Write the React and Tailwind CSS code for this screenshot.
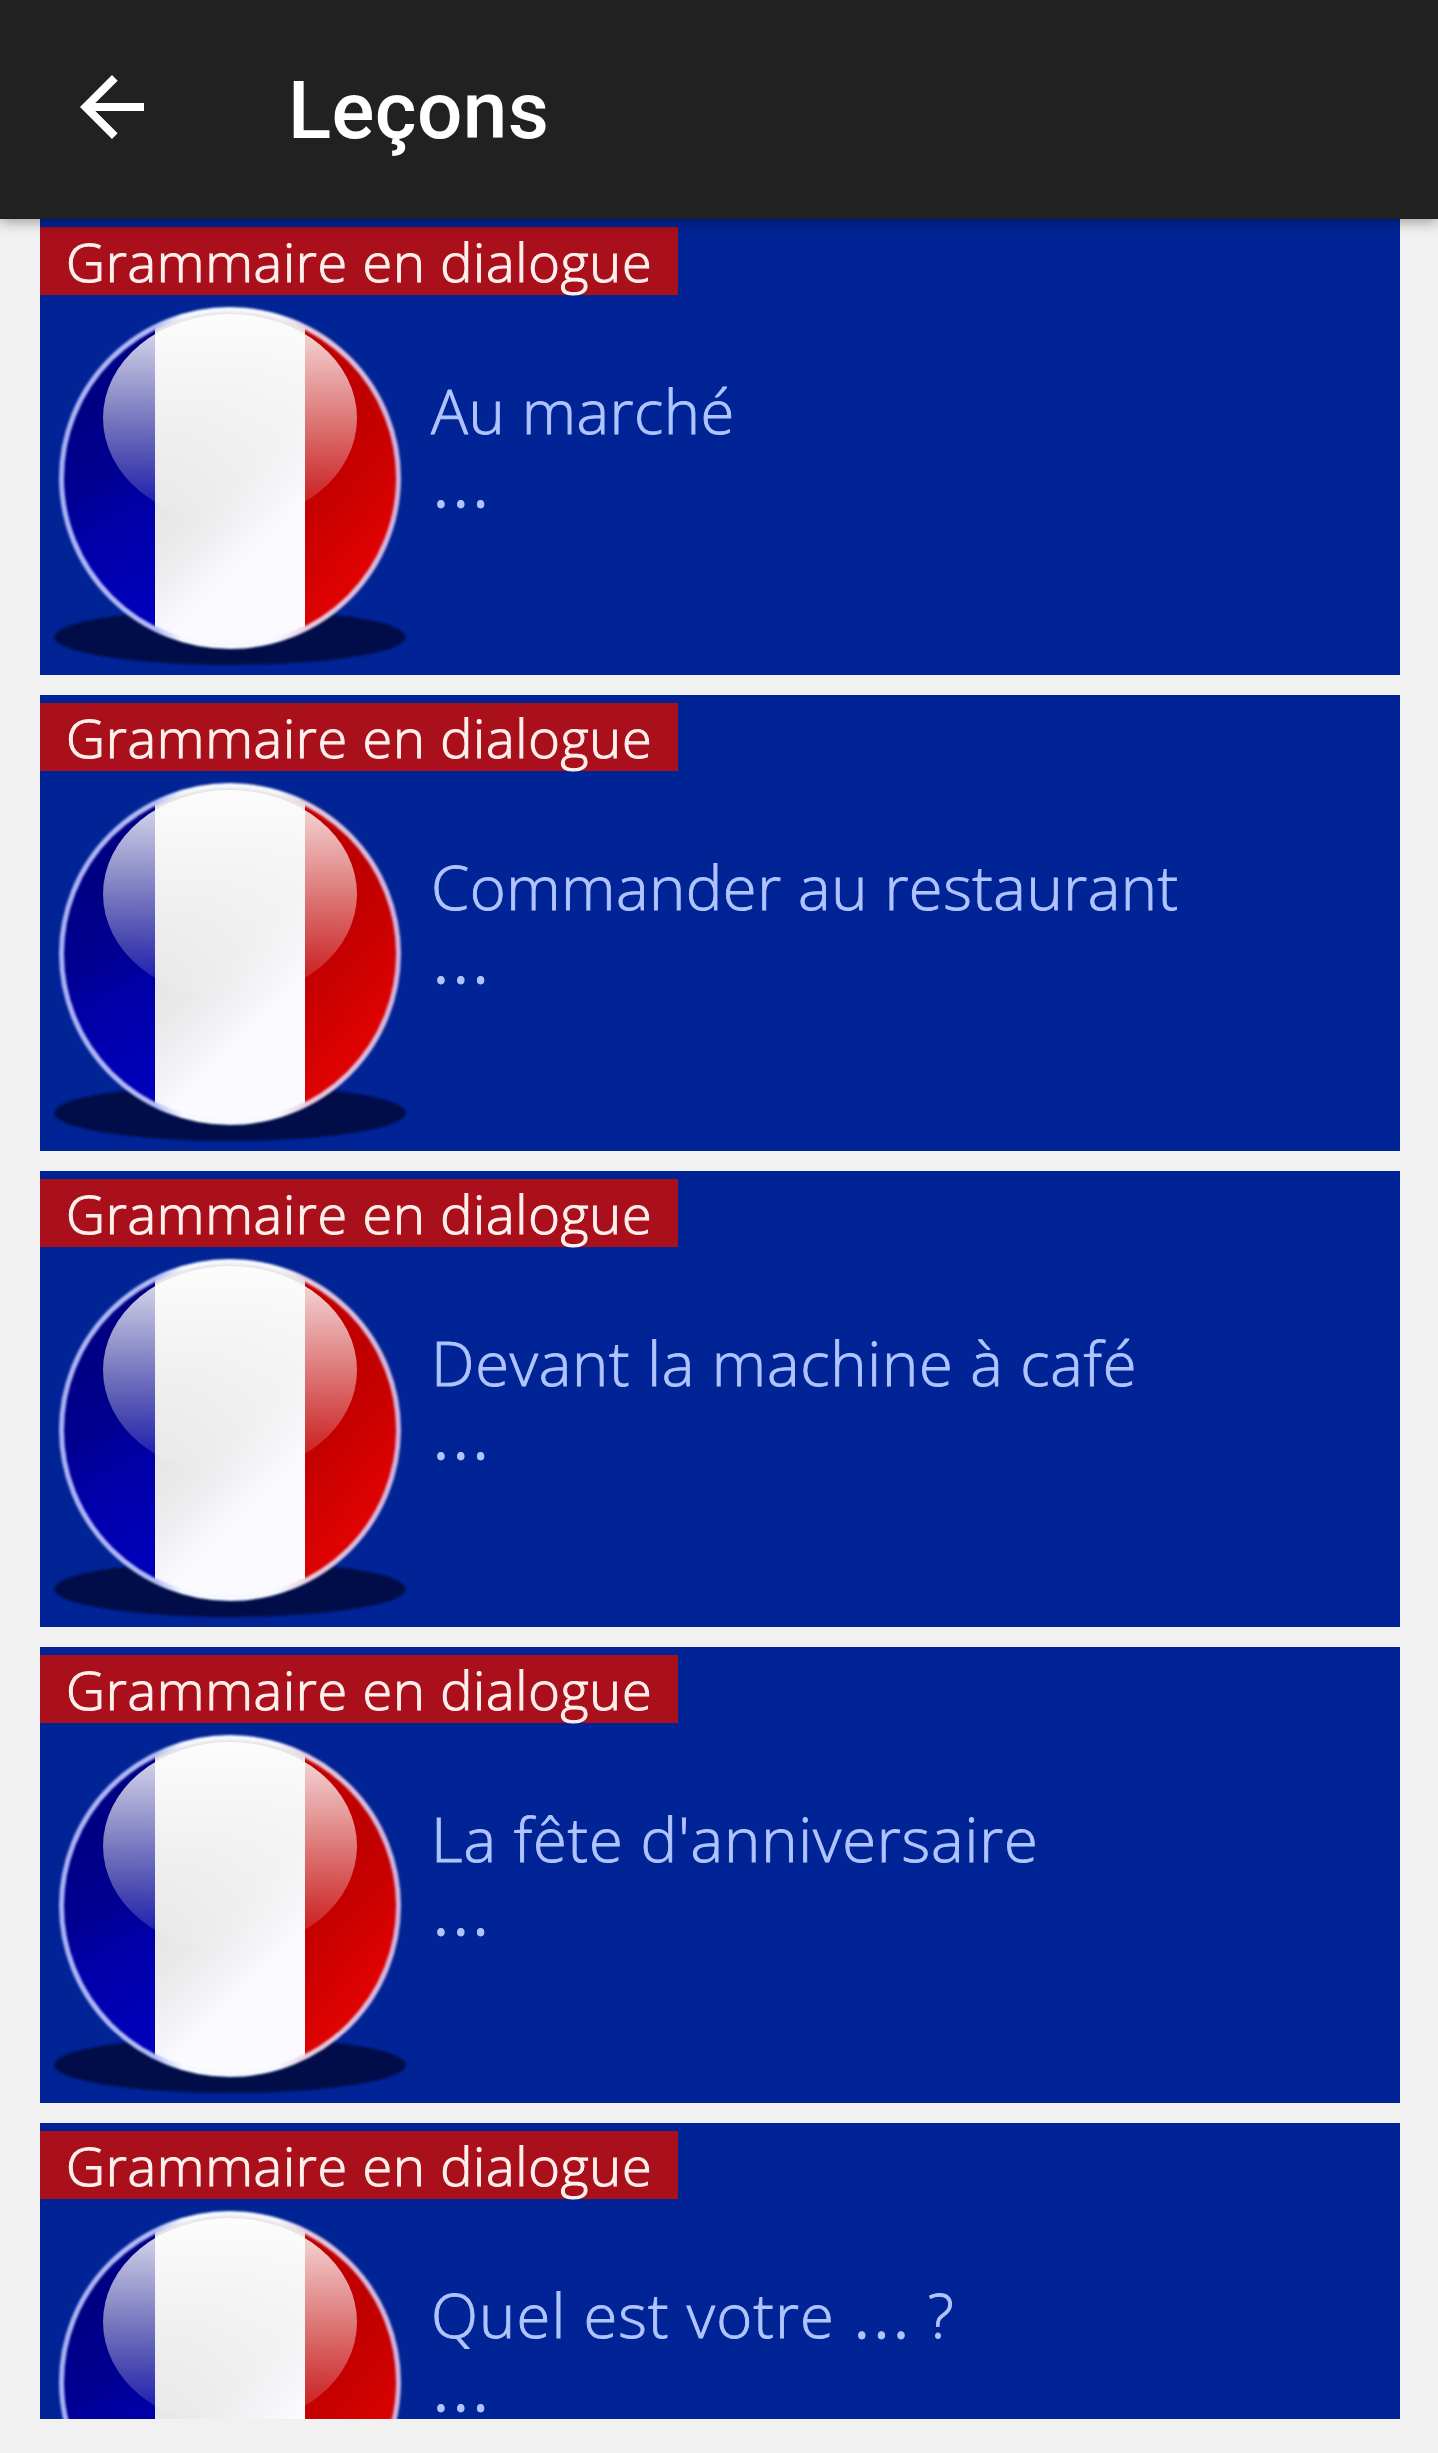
const lessons = [
  { title: "Au marché", tracking: "tracking-[0.5px]" },
  { title: "Commander au restaurant", tracking: "tracking-[0.5px]" },
  { title: "Devant la machine à café", tracking: "tracking-[0.75px]" },
  { title: "La fête d'anniversaire", tracking: "tracking-[0.85px]" },
  { title: "Quel est votre … ?", tracking: "tracking-[1.1px]" },
];

function FlagBall({ id }) {
  const u = (name) => `${name}-${id}`;
  const ref = (name) => `url(#${name}-${id})`;
  return (
    <svg viewBox="0 0 380 380" className="block h-[380px] w-[380px] shrink-0">
      <defs>
        <clipPath id={u("ball")}>
          <circle cx="190" cy="183" r="169" />
        </clipPath>
        <linearGradient id={u("blue")} gradientUnits="userSpaceOnUse" x1="40" y1="120" x2="150" y2="320">
          <stop offset="0" stopColor="#000084" />
          <stop offset="0.3" stopColor="#000092" />
          <stop offset="0.5" stopColor="#0000a8" />
          <stop offset="1" stopColor="#0000c0" />
        </linearGradient>
        <linearGradient id={u("white")} gradientUnits="userSpaceOnUse" x1="130" y1="160" x2="230" y2="260">
          <stop offset="0" stopColor="#e6e4e4" />
          <stop offset="0.45" stopColor="#eaeaeb" />
          <stop offset="0.9" stopColor="#f9f9ff" />
          <stop offset="1" stopColor="#fafaff" />
        </linearGradient>
        <linearGradient id={u("red")} gradientUnits="userSpaceOnUse" x1="265" y1="170" x2="345" y2="240">
          <stop offset="0" stopColor="#c00000" />
          <stop offset="0.35" stopColor="#c60000" />
          <stop offset="1" stopColor="#de0202" />
        </linearGradient>
        <linearGradient id={u("shine")} x1="0" y1="0" x2="0" y2="1">
          <stop offset="0" stopColor="#fff" stopOpacity="0.9" />
          <stop offset="1" stopColor="#fff" stopOpacity="0.05" />
        </linearGradient>
        <linearGradient id={u("rim")} x1="0" y1="0" x2="1" y2="0">
          <stop offset="0" stopColor="#a9b0f4" />
          <stop offset="0.28" stopColor="#b4bcf6" />
          <stop offset="0.36" stopColor="#f4f8ff" />
          <stop offset="0.64" stopColor="#f4f8ff" />
          <stop offset="0.74" stopColor="#e6c8dc" />
          <stop offset="1" stopColor="#cfb0dc" />
        </linearGradient>
        <filter id={u("soft")} x="-5%" y="-5%" width="110%" height="110%">
          <feGaussianBlur stdDeviation="1.3" />
        </filter>
      </defs>
      <ellipse cx="190" cy="342" rx="176" ry="28" fill="#000f4a" filter={ref("soft")} />
      <g clipPath={ref("ball")}>
        <rect x="15" y="10" width="101" height="350" fill={ref("blue")} />
        <rect x="115" y="10" width="150" height="350" fill={ref("white")} />
        <rect x="265" y="10" width="105" height="350" fill={ref("red")} />
        <ellipse cx="190" cy="123" rx="127" ry="104" fill={ref("shine")} />
      </g>
      <circle cx="190" cy="183" r="168.5" fill="none" stroke={ref("rim")} strokeWidth="5" filter={ref("soft")} />
    </svg>
  );
}

function LessonTitle({ lesson }) {
  const [before, after] = lesson.title.split("…");
  return (
    <h2 className={lesson.tracking}>
      {before}
      {after !== undefined && <span className="text-[82px] leading-[0] tracking-normal">…</span>}
      {after}
    </h2>
  );
}

function LessonCard({ lesson, id }) {
  return (
    <article className="flex h-[456px] shrink-0 flex-col bg-[#002496] pt-2">
      <div className="flex h-[68px] w-[638px] shrink-0 items-center bg-[#aa0f1c] pl-[26px] font-['Open_Sans','Noto_Sans',sans-serif] text-[54px] leading-[66px] font-light tracking-[0.7px] whitespace-nowrap text-[#fff0ec] [-webkit-text-stroke:1.1px_#fff0ec]">
        <span className="mb-px">Grammaire en dialogue</span>
      </div>
      <div className="flex">
        <FlagBall id={id} />
        <div className="pt-[79px] pl-[11px] font-['Open_Sans','Noto_Sans',sans-serif] text-[61.5px] leading-[72px] font-light whitespace-nowrap text-[#b0c4ff] [-webkit-text-stroke:0.9px_#b0c4ff]">
          <LessonTitle lesson={lesson} />
          <p className="mt-px">
            <span className="text-[83px] leading-[0]">…</span>
          </p>
        </div>
      </div>
    </article>
  );
}

export default function App() {
  return (
    <div className="flex h-[2453px] w-[1438px] flex-col overflow-hidden bg-[#f1f1f1]">
      <header className="z-10 flex h-[219px] shrink-0 items-center bg-[#212121] pl-16 shadow-[0_2px_14px_rgba(0,0,0,0.4)]">
        <svg viewBox="0 0 24 24" className="mb-[5px] h-24 w-24 fill-white">
          <path d="M20 11H7.83l5.59-5.59L12 4l-8 8 8 8 1.41-1.41L7.83 13H20v-2z" />
        </svg>
        <h1 className="mt-0.5 ml-[128px] font-[Roboto,sans-serif] text-[80px] leading-[94px] font-medium tracking-[0.4px] text-white">Leçons</h1>
      </header>
      <main className="flex h-[2200px] flex-col gap-5 overflow-hidden pr-[38px] pl-10">
        {lessons.map((lesson, i) => (
          <LessonCard key={lesson.title} id={i} lesson={lesson} />
        ))}
      </main>
    </div>
  );
}
